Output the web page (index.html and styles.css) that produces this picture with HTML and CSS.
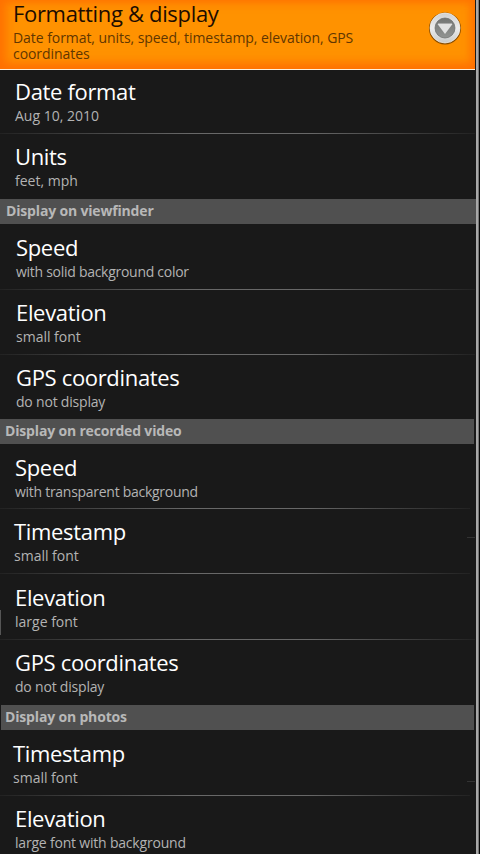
FILE: index.html
```
<!DOCTYPE html>
<html lang="en">
<head>
<meta charset="utf-8">
<title>Formatting &amp; display</title>
<link rel="stylesheet" href="styles.css">
</head>
<body>
<div class="screen">
  <main class="list">
    <div class="hero">
      <div class="hero-text">
        <div class="title">Formatting &amp; display</div>
        <div class="summary">Date format, units, speed, timestamp, elevation, GPS coordinates</div>
      </div>
      <svg class="more" width="34" height="34" viewBox="0 0 34 34">
        <defs>
          <linearGradient id="ring" x1="0" y1="0" x2="0" y2="1"><stop offset="0" stop-color="#d0d0d0"/><stop offset=".5" stop-color="#ececec"/><stop offset="1" stop-color="#c9cbca"/></linearGradient>
          <linearGradient id="disc" x1="0" y1="0" x2="0" y2="1"><stop offset="0" stop-color="#747674"/><stop offset="1" stop-color="#929492"/></linearGradient>
        </defs>
        <circle cx="17" cy="17.4" r="16" fill="#6b3c00" opacity=".8"/>
        <circle cx="17" cy="17" r="15" fill="url(#ring)" stroke="#f4f4f4" stroke-width=".7"/>
        <circle cx="17" cy="17" r="10" fill="url(#disc)" stroke="#686a68" stroke-width=".7"/>
        <path d="M9.5 13h15L17 23z" fill="#e2e2e2"/>
        <path d="M10 12.5h14" stroke="#aaa" stroke-width="1"/>
      </svg>
    </div>
    <div class="row first"><div class="title">Date format</div><div class="summary">Aug 10, 2010</div></div>
    <div class="row last"><div class="title">Units</div><div class="summary">feet, mph</div></div>
    <h2 class="section wide">Display on viewfinder</h2>
    <div class="row in tall"><div class="title">Speed</div><div class="summary tight">with solid background color</div></div>
    <div class="row in"><div class="title">Elevation</div><div class="summary">small font</div></div>
    <div class="row in last short"><div class="title">GPS coordinates</div><div class="summary snug">do not display</div></div>
    <h2 class="section">Display on recorded video</h2>
    <div class="row narrow loose"><div class="title">Speed</div><div class="summary tight">with transparent background</div></div>
    <div class="row narrow out mark"><div class="title">Timestamp</div><div class="summary">small font</div></div>
    <div class="row tall edge"><div class="title">Elevation</div><div class="summary">large font</div></div>
    <div class="row last"><div class="title">GPS coordinates</div><div class="summary snug">do not display</div></div>
    <h2 class="section inset">Display on photos</h2>
    <div class="row narrow far mark photos"><div class="title">Timestamp</div><div class="summary">small font</div></div>
    <div class="row last"><div class="title">Elevation</div><div class="summary snug">large font with background</div></div>
  </main>
  <div class="scrollbar"></div>
</div>
</body>
</html>
```
FILE: styles.css
```
* { box-sizing: border-box; }
body {
  margin: 0;
  background: #191919;
  font-family: "Open Sans", "Noto Sans", sans-serif;
}
.screen {
  display: flex;
  width: 480px;
  height: 854px;
  overflow: hidden;
  background: #191919;
}
.list { width: 476px; flex: none; }
.scrollbar {
  width: 4px;
  background: linear-gradient(90deg, #a8a8a8 0 2px, #777 2px 3px, #080808 3px);
}
.title {
  font-size: 22px;
  line-height: 28px;
  letter-spacing: -0.33px;
  color: #fff;
  white-space: nowrap;
}
.summary {
  padding-top: 2px;
  font-size: 14px;
  line-height: 18px;
  color: #b3b3b3;
}
.summary.tight { letter-spacing: -0.28px; }
.summary.snug { letter-spacing: -0.2px; }
.hero {
  display: flex;
  width: 475px;
  height: 70px;
  padding-left: 13px;
  border-bottom: 1px solid #fff0d8;
  background: #ff9200;
  box-shadow: inset 0 -4px 12px #ff7000, inset 5px 0 12px #ff7400, inset -4px 0 10px #ff7c00;
}
.hero-text { width: 358px; }
.hero .title { margin-top: -1px; color: #1c0c00; }
.hero .summary { line-height: 16px; color: #613600; padding-top: 3px; letter-spacing: -0.06px; }
.more { margin: 11px 0 0 57px; flex: none; }
.row {
  position: relative;
  height: 65px;
  padding: 8px 0 0 15px;
}
.row::after {
  content: "";
  position: absolute;
  left: 0;
  bottom: 0;
  width: 475px;
  height: 1px;
  background: linear-gradient(90deg, #222, #686868 40%, #686868 65%, #222);
}
.row.narrow::after { width: 470px; }
.row.last::after { display: none; }
.row.first { height: 64px; padding-top: 7px; }
.row.tall { height: 66px; padding-top: 9px; }
.row.in { padding-left: 16px; }
.row.short { height: 64px; }
.row.out { padding-left: 14px; }
.row.far { padding-left: 13px; }
.row.loose { padding-top: 9px; }
.row.edge::before {
  content: "";
  position: absolute;
  left: 0;
  top: 36px;
  width: 1px;
  height: 25px;
  background: #555;
}
.row.mark::before {
  content: "";
  position: absolute;
  right: 1px;
  top: 28px;
  width: 8px;
  height: 1px;
  background: #333;
}
.row.photos { height: 66px; padding-top: 9px; }
.row.photos::before { top: 51px; }
.section {
  width: 474px;
  height: 25px;
  margin: 0;
  padding-left: 5px;
  background: #505050;
  color: #b8b8b8;
  font-size: 14px;
  font-weight: 700;
  line-height: 24px;
  letter-spacing: -0.17px;
}
.section.wide { width: 476px; padding-left: 6px; }
.section.inset { width: 473px; margin-left: 1px; padding-left: 4px; }
```
